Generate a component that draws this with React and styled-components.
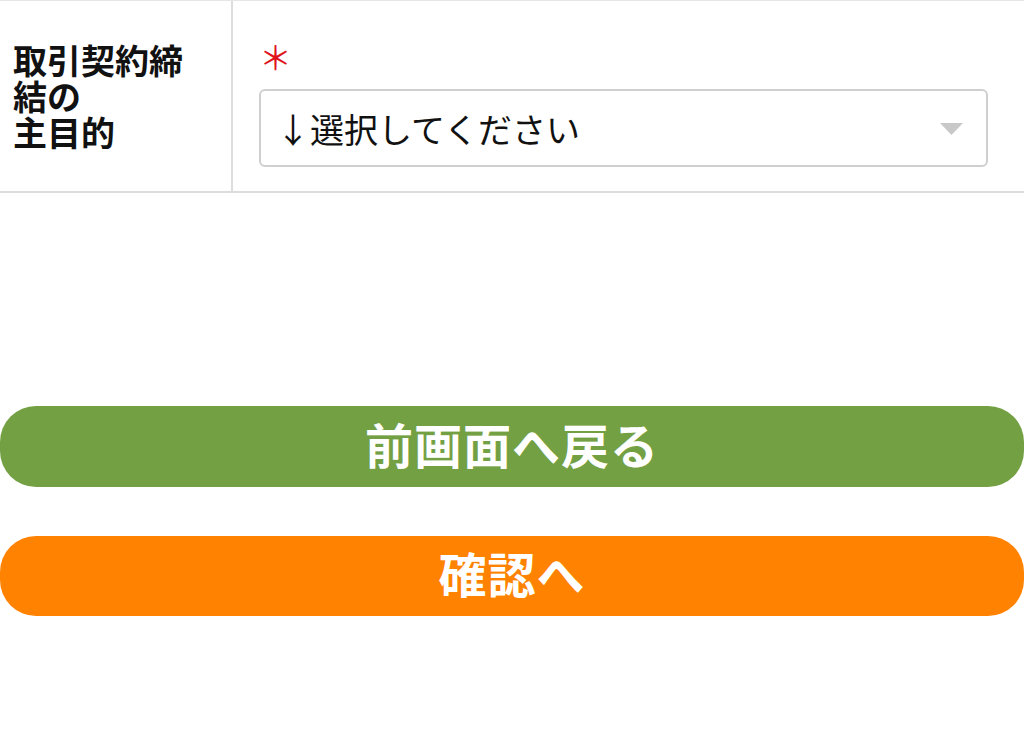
import React from 'react';
import styled, { createGlobalStyle } from 'styled-components';

const GlobalStyle = createGlobalStyle`
    html, body {
        margin: 0;
        padding: 0;
        background: #fff;
    }
    body {
        font-family: "Noto Sans CJK JP", "Noto Sans", sans-serif;
        color: #111;
    }
`;

const FormRow = styled.div`
    display: grid;
    grid-template-columns: 233px 1fr;
    border-top: 1px solid #e6e6e6;
    border-bottom: 2px solid #dcdcdc;
`;

const LabelCell = styled.div`
    display: flex;
    align-items: center;
    padding: 0 24px 0 13px;
    border-right: 2px solid #dcdcdc;
    font-size: 34px;
    line-height: 36px;
    font-weight: 700;
    color: #111;
`;

const FieldCell = styled.div`
    padding: 36px 36px 24px 26px;
`;

const Required = styled.div`
    color: #e0131b;
    font-size: 33px;
    line-height: 38px;
    margin-bottom: 14px;
`;

const SelectWrap = styled.div`
    position: relative;
`;

const Select = styled.select`
    display: block;
    width: 100%;
    height: 78px;
    box-sizing: border-box;
    appearance: none;
    -webkit-appearance: none;
    border: 2px solid #cfcfcf;
    border-radius: 6px;
    background: #fff;
    padding: 0 60px 0 15px;
    font-family: "Noto Sans CJK JP", "Noto Sans", sans-serif;
    font-size: 34px;
    font-weight: 400;
    color: #111;
    outline: none;
`;

const Caret = styled.svg`
    position: absolute;
    right: 25px;
    top: 34px;
    pointer-events: none;
`;

const Actions = styled.div`
    display: flex;
    flex-direction: column;
    gap: 49px;
    margin-top: 213px;
`;

const PillButton = styled.button`
    display: flex;
    align-items: center;
    justify-content: center;
    width: 100%;
    height: ${p => p.$h || 80}px;
    border: none;
    border-radius: 36px;
    background: ${p => p.$color};
    color: #fff;
    font-family: "Noto Sans CJK JP", "Noto Sans", sans-serif;
    font-size: 48px;
    font-weight: 700;
    letter-spacing: 1px;
    padding: 0 0 8px;
    cursor: pointer;
`;

function App() {
    return (
        <>
            <GlobalStyle />
            <FormRow>
                <LabelCell>
                    <span>取引契約締結の<br />主目的</span>
                </LabelCell>
                <FieldCell>
                    <Required>＊</Required>
                    <SelectWrap>
                        <Select defaultValue="">
                            <option value="">↓選択してください</option>
                        </Select>
                        <Caret width="23" height="12" viewBox="0 0 23 12">
                            <path d="M0 0 H23 L11.5 12 Z" fill="#c8c8c8" />
                        </Caret>
                    </SelectWrap>
                </FieldCell>
            </FormRow>
            <Actions>
                <PillButton $color="#74a044" $h={81}>前画面へ戻る</PillButton>
                <PillButton $color="#ff8200">確認へ</PillButton>
            </Actions>
        </>
    );
}

export default App;
